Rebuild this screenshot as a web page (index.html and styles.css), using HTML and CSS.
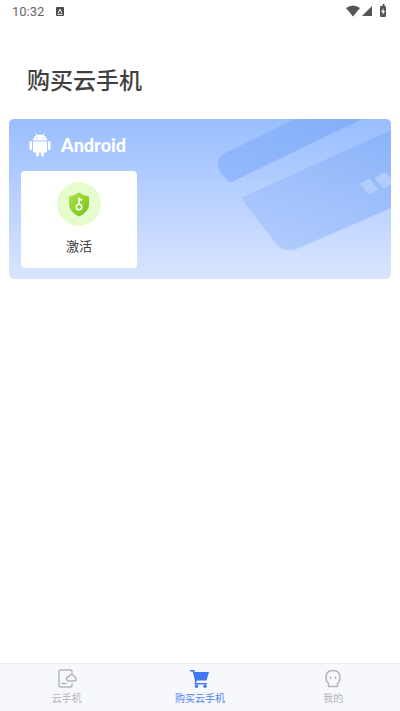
FILE: index.html
```html
<!DOCTYPE html>
<html lang="zh-CN">
<head>
<meta charset="utf-8">
<meta name="viewport" content="width=device-width, initial-scale=1">
<title>购买云手机</title>
<link rel="stylesheet" href="styles.css">
</head>
<body>
<header class="status">
  <span class="time">10:32</span>
  <svg class="note" viewBox="0 0 8 9" width="8" height="9"><rect width="8" height="9" rx="1" fill="#4a4a4a"/><path d="M2.200 6L4 2.200L5.800 6M1.500 7.300h5" fill="none" stroke="#fff" stroke-width="1"/></svg>
  <svg class="signals" viewBox="0 0 42 14" width="42" height="14" fill="#555">
    <path d="M0 4Q7-1 14 4L7 12.500Z"/>
    <path d="M26 2V12H16Z"/>
    <path d="M35 2h1.500V0h2v2H39q1 0 1 1v9q0 1-1 1h-4q-1 0-1-1V3q0-1 1-1Z"/>
    <path d="M37.500 4l-2.300 4h1.500v3L39 7h-1.500Z" fill="#fff"/>
  </svg>
</header>
<main>
  <h1>购买云手机</h1>
  <section class="panel">
    <svg class="art" viewBox="0 0 184 160" width="184" height="160">
      <defs>
        <linearGradient id="band" x1="0" y1="1" x2="1" y2="0"><stop offset="0" stop-color="#94bafc"/><stop offset="1" stop-color="#84aef7"/></linearGradient>
        <linearGradient id="body" x1="0.300" y1="1" x2="0.700" y2="0"><stop offset="0" stop-color="#b0cbfd"/><stop offset="1" stop-color="#8eb5fa"/></linearGradient>
      </defs>
      <path d="M88 0H155L25 63Q22 64 20 61L13 53Q7 40 18 34Z" fill="url(#band)"/>
      <path d="M34 79L184 11V89L92 129Q78 135 69 125Z" fill="url(#body)"/>
      <path d="M154 64l7-4q2-1 3 1l6 8q1 2-1 3l-5 3q-2 1-4-1l-6-8q-1-1 0-2ZM169 58l7-4q2-1 3 0l5 5v7l-6 3q-2 1-3-1l-7-8q-1-1 1-2Z" fill="#b2cdfd"/>
    </svg>
    <div class="brand">
      <svg viewBox="0 0 22 26" width="22" height="26" fill="#fff">
        <path d="M4 8.500Q4 5 7.500 3.200L6 1l.6-.5L8.200 2.900Q11 2 13.800 2.900L15.400.5 16 1l-1.500 2.200Q18 5 18 8.500Z"/>
        <path d="M4 9.500h14V19q0 1.500-1.500 1.500H15V23q0 1.500-1.500 1.500T12 23v-2.500h-2V23q0 1.500-1.500 1.500T7 23v-2.500H5.500Q4 20.500 4 19Z"/>
        <rect x=".5" y="9" width="2.600" height="9" rx="1.300"/><rect x="18.900" y="9" width="2.600" height="9" rx="1.300"/>
        <circle cx="8" cy="6" r=".7" fill="#9cc0ff"/><circle cx="14" cy="6" r=".7" fill="#9cc0ff"/>
      </svg>
      <span>Android</span>
    </div>
    <button class="activate" type="button">
      <span class="badge">
        <svg viewBox="0 0 22 25" width="22" height="25">
          <defs><linearGradient id="shield" x1="0" y1="0" x2="1" y2="1"><stop offset="0" stop-color="#a9e347"/><stop offset=".5" stop-color="#91d430"/><stop offset="1" stop-color="#70bd1c"/></linearGradient></defs>
          <path d="M11 .5Q15 3.500 21 4.500V12Q21 20 11 24.500Q1 20 1 12V4.500Q7 3.500 11 .5Z" fill="url(#shield)"/>
          <path d="M11 12V6.500l3 2" fill="none" stroke="#fff" stroke-width="1.600"/><circle cx="11" cy="15" r="2.700" fill="none" stroke="#fff" stroke-width="1.600"/>
        </svg>
      </span>
      <span>激活</span>
    </button>
  </section>
</main>
<nav class="tabs">
  <a href="#phone">
    <svg viewBox="0 0 20 20" width="20" height="20" fill="none" stroke="#b3b5ba" stroke-width="1.500" stroke-linecap="round" stroke-linejoin="round"><path d="M15 4V3q0-2-2-2H4Q2 1 2 3v13q0 2 2 2h9q2 0 2-2v-1M5 14.500h4"/><path d="M11.500 12q-2-.3-2-2.200T11.800 7.600Q12.500 5.500 14.600 5.500T17.300 7.700Q19 8 19 9.900T17 12Z"/></svg>
    <span>云手机</span>
  </a>
  <a class="active" href="#buy" aria-current="page">
    <svg viewBox="0 0 20 20" width="20" height="20"><path d="M0 1h4l1 2h14l-2.500 8.500H7L6 14h11v1.500H4.500L5 11.500 2.700 2.500H0Z" fill="#3f78f2"/><circle cx="6.500" cy="17.300" r="1.700" fill="#3f78f2"/><circle cx="15" cy="17.300" r="1.700" fill="#3f78f2"/></svg>
    <span>购买云手机</span>
  </a>
  <a href="#mine">
    <svg viewBox="0 0 20 20" width="20" height="20" fill="none" stroke="#b3b5ba" stroke-width="1.500" stroke-linejoin="round"><path d="M5.500 17.500V14.300Q3 12.500 3 8.500Q3 1.500 10 1.500T17 8.500Q17 12.500 14.500 14.300v3.200Z"/><path d="M7.500 8v1.500M12.500 8v1.500" stroke-linecap="round"/></svg>
    <span>我的</span>
  </a>
</nav>
</body>
</html>
```
FILE: styles.css
```css
* {
  box-sizing: border-box;
}

body {
  margin: 0;
  min-height: 100vh;
  display: flex;
  flex-direction: column;
  background: #fff;
  color: #404040;
  font-family: Roboto, "Noto Sans CJK SC", sans-serif;
}

svg {
  display: block;
}

.status {
  display: flex;
  align-items: center;
  height: 22px;
  padding: 0 12px;
}

.time {
  font-size: 13px;
  color: #666;
}

.note {
  margin-left: 12px;
}

.signals {
  margin-left: auto;
}

main {
  flex: 1;
  padding: 0 9px;
}

h1 {
  margin: 42px 18px 19px;
  font-size: 23px;
  line-height: 36px;
  font-weight: 500;
}

.panel {
  position: relative;
  overflow: hidden;
  padding: 12px 12px 11px;
  border-radius: 5px;
  background: linear-gradient(#99beff, #d9e5ff);
}

.art {
  position: absolute;
  top: 0;
  right: 0;
}

.brand {
  display: flex;
  align-items: center;
  gap: 10px;
  height: 28px;
  margin: 0 8px 12px;
  color: #fff;
  font-family: Lato, sans-serif;
  font-size: 18px;
  font-weight: 900;
}

.activate {
  display: flex;
  flex-direction: column;
  align-items: center;
  gap: 11px;
  width: 116px;
  padding: 11px 0;
  border: 0;
  border-radius: 4px;
  background: #fff;
  color: #404040;
  font: 13px/20px Roboto, "Noto Sans CJK SC", sans-serif;
}

.badge {
  display: grid;
  place-items: center;
  width: 44px;
  height: 44px;
  border-radius: 50%;
  background: #e5fccf;
}

.tabs {
  display: grid;
  grid-template-columns: repeat(3, 1fr);
  height: 48px;
  padding-top: 5px;
  border-top: 1px solid #e9eaee;
  background: #f7f8fb;
}

.tabs a {
  display: flex;
  flex-direction: column;
  align-items: center;
  color: #b3b5ba;
  font-size: 10px;
  line-height: 20px;
  text-decoration: none;
}

.tabs .active {
  color: #4d82f0;
}
```
